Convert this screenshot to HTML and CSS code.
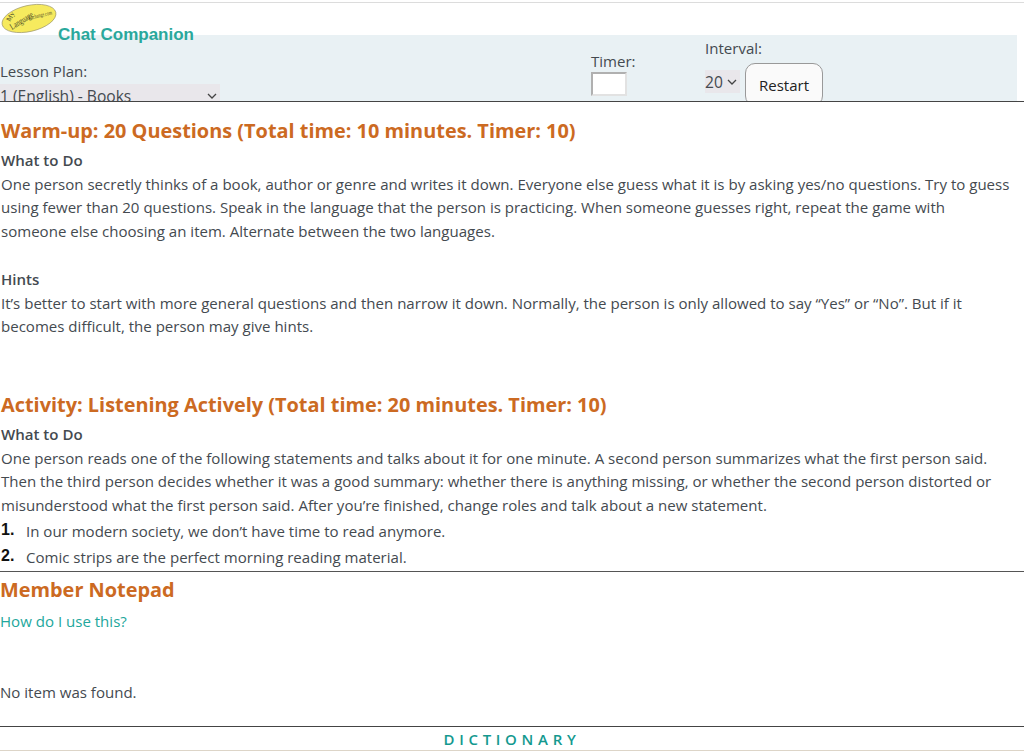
FILE: index.html
```html
<!DOCTYPE html>
<html lang="en">
<head>
<meta charset="utf-8">
<title>Chat Companion</title>
<link rel="stylesheet" href="styles.css">
</head>
<body>
<header class="header">
  <div class="brand">
    <svg class="logo" width="58" height="32" viewBox="0 0 58 32" aria-hidden="true">
      <ellipse cx="29" cy="15.5" rx="27.5" ry="13" transform="rotate(-13 29 15.5)" fill="#f6ea5e" stroke="#8f8a60" stroke-width="0.6"/>
      <text class="logo-my" x="10" y="19" transform="rotate(-60 10 19)">My</text>
      <text class="logo-text" x="12" y="27" textLength="26" lengthAdjust="spacingAndGlyphs" transform="rotate(-32 12 27)">Language</text>
      <text class="logo-text logo-small" x="29" y="17" textLength="24" lengthAdjust="spacingAndGlyphs" transform="rotate(-14 29 17)">Exchange.com</text>
    </svg>
    <h1 class="title">Chat Companion</h1>
  </div>
  <div class="panel">
    <div class="field field-lesson">
      <label class="label">Lesson Plan:</label>
      <div class="select select-lesson"><span>1 (English) - Books</span><svg class="chev" width="10" height="6" viewBox="0 0 10 6"><path d="M1 1l4 4 4-4" fill="none" stroke="#444" stroke-width="1.3"/></svg></div>
    </div>
    <div class="field field-timer">
      <label class="label">Timer:</label>
      <div class="timer-box"></div>
    </div>
    <div class="field field-interval">
      <label class="label">Interval:</label>
      <div class="interval-row">
        <div class="select select-interval"><span>20</span><svg class="chev" width="10" height="6" viewBox="0 0 10 6"><path d="M1 1l4 4 4-4" fill="none" stroke="#444" stroke-width="1.3"/></svg></div>
        <button class="restart">Restart</button>
      </div>
    </div>
  </div>
</header>
<main class="lesson">
  <h2 class="heading">Warm-up: 20 Questions (Total time: 10 minutes. Timer: 10)</h2>
  <p class="sub">What to Do</p>
  <p class="para">One person secretly thinks of a book, author or genre and writes it down. Everyone else guess what it is by asking yes/no questions. Try to guess using fewer than 20 questions. Speak in the language that the person is practicing. When someone guesses right, repeat the game with someone else choosing an item. Alternate between the two languages.</p>
  <p class="sub sub-hints">Hints</p>
  <p class="para">It’s better to start with more general questions and then narrow it down. Normally, the person is only allowed to say “Yes” or “No”. But if it becomes difficult, the person may give hints.</p>
  <h2 class="heading heading-activity">Activity: Listening Actively (Total time: 20 minutes. Timer: 10)</h2>
  <p class="sub">What to Do</p>
  <p class="para">One person reads one of the following statements and talks about it for one minute. A second person summarizes what the first person said. Then the third person decides whether it was a good summary: whether there is anything missing, or whether the second person distorted or misunderstood what the first person said. After you’re finished, change roles and talk about a new statement.</p>
  <ol class="statements">
    <li class="statement"><b class="num">1.</b><span>In our modern society, we don’t have time to read anymore.</span></li>
    <li class="statement"><b class="num">2.</b><span>Comic strips are the perfect morning reading material.</span></li>
  </ol>
</main>
<section class="notepad">
  <h2 class="heading heading-notepad">Member Notepad</h2>
  <a class="help" href="#">How do I use this?</a>
  <p class="empty">No item was found.</p>
</section>
<footer class="footer">DICTIONARY</footer>
</body>
</html>
```

FILE: styles.css
```css
* { box-sizing: border-box; }
html, body { margin: 0; padding: 0; }
body {
  width: 1024px;
  height: 751px;
  overflow: hidden;
  background: #fff;
  color: #444a50;
  font-family: "Open Sans", "Noto Sans", sans-serif;
  font-size: 15.05px;
  padding-top: 2px;
}
.header {
  position: relative;
  height: 100px;
  overflow: hidden;
  border-top: 1px solid #dcdcdc;
  border-bottom: 1px solid #444;
}
.brand {
  display: flex;
  height: 32px;
  position: relative;
  z-index: 1;
  padding: 0;
}
.logo { flex: none; }
.logo-text {
  font-family: "Liberation Serif", serif;
  font-size: 9px;
  fill: #4c4a26;
}
.logo-small { font-size: 6px; }
.logo-my {
  font-family: "Liberation Serif", serif;
  font-size: 7px;
  fill: #4c4a26;
}
.title {
  margin: 22px 0 0 0;
  font-family: "Liberation Sans", Arial, sans-serif;
  font-weight: bold;
  font-size: 17px;
  line-height: 19px;
  color: #2aa89c;
  white-space: nowrap;
}
.panel {
  display: flex;
  width: 1017px;
  height: 67px;
  background: #e9f1f4;
}
.field { display: flex; flex-direction: column; }
.label { line-height: 20px; white-space: nowrap; }
.field-lesson { width: 220px; margin-top: 26px; }
.field-timer { margin-left: 371px; margin-top: 16px; width: 114px; }
.field-interval { margin-top: 3px; }
.select {
  background: #e9e7eb;
  display: flex;
  align-items: center;
  justify-content: space-between;
  white-space: nowrap;
}
.select-lesson { height: 24px; margin-top: 3px; align-items: flex-start; line-height: 24px; padding-right: 2px; font-size: 15.6px; }
.select-lesson .chev { margin: 9px 1px 0 0; }
.select-interval { width: 35px; height: 23px; padding-right: 3px; margin-top: 12px; font-size: 15.6px; }
.timer-box {
  width: 36px;
  height: 24px;
  background: #fff;
  border: 2px solid #b0b0b0;
  border-right-color: #e2e2e2;
  border-bottom-color: #e2e2e2;
  margin-top: 1px;
}
.interval-row { display: flex; align-items: flex-start; gap: 5px; }
.restart {
  width: 78px;
  height: 43px;
  background: #fafafa;
  border: 1px solid #999;
  border-radius: 10px;
  font-family: "Open Sans", sans-serif;
  font-size: 15px;
  color: #222;
  padding: 0;
  margin-top: 5px;
}
.lesson { padding: 0 10px 0 1px; height: 470px; border-bottom: 1px solid #555; overflow: hidden; }
.heading {
  margin: 0;
  font-size: 19.9px;
  line-height: 26px;
  font-weight: 700;
  color: #cc6a22;
  white-space: nowrap;
}
.lesson > .heading:first-child { margin-top: 16px; }
.heading-activity { margin-top: 53px; }
.sub, .para { margin: 0; line-height: 23.7px; }
.sub { font-weight: 600; }
.sub-hints { margin-top: 24px; }
.heading + .sub { margin-top: 5px; }
.statements { list-style: none; margin: 0; padding: 0; }
.statement { display: flex; line-height: 26px; }
.num { width: 25px; color: #111; font-family: "Liberation Sans", sans-serif; font-size: 16px; margin-top: -1px; }
.notepad { height: 155px; border-bottom: 1px solid #444; display: flex; flex-direction: column; align-items: flex-start; }
.heading-notepad { margin-top: 5px; }
.help { color: #22a79c; text-decoration: none; line-height: 24px; margin-top: 6px; }
.empty { margin: 47px 0 0 0; line-height: 24px; }
.footer {
  text-align: center;
  color: #14998f;
  font-weight: 600;
  font-size: 15px;
  letter-spacing: 4.7px;
  line-height: 25px;
  height: 24px;
  border-bottom: 1px solid #ddd5c8;
}
```
